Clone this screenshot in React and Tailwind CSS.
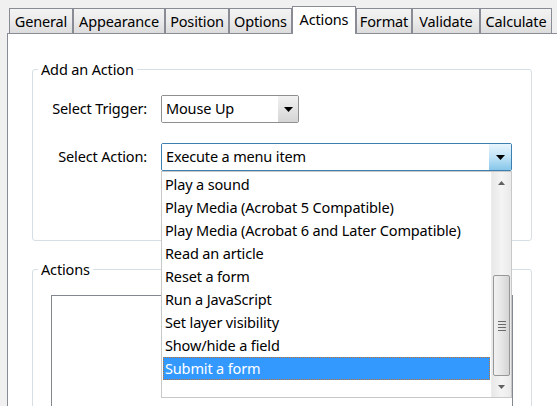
import React from 'react';

const tabs = [
  ['General', 64],
  ['Appearance', 92],
  ['Position', 64],
  ['Options', 63],
  ['Actions', 64],
  ['Format', 56],
  ['Validate', 68],
  ['Calculate', 72],
];

const actionItems = [
  'Play a sound',
  'Play Media (Acrobat 5 Compatible)',
  'Play Media (Acrobat 6 and Later Compatible)',
  'Read an article',
  'Reset a form',
  'Run a JavaScript',
  'Set layer visibility',
  'Show/hide a field',
  'Submit a form',
];

function Arrow({ up, className }) {
  return (
    <svg width="9" height="5" viewBox="0 0 9 5" className={className}>
      <path d={up ? 'M0 5 L4.5 0 L9 5 Z' : 'M0 0 L9 0 L4.5 5 Z'} fill="currentColor" />
    </svg>
  );
}

function Scrollbar() {
  return (
    <div className="w-[20px] flex flex-col bg-gradient-to-r from-[#e8e8e8] via-[#f4f4f4] to-[#eaeaea] border-l border-[#ececec]">
      <div className="h-[22px] flex items-center justify-center text-[#606060]">
        <Arrow up className="w-[7px] h-[4px]" />
      </div>
      <div className="h-[81px]" />
      <div className="h-[101px] mx-px rounded-[2px] border border-[#979797] bg-gradient-to-r from-[#f2f2f2] via-[#e6e6e6] to-[#d4d4d4] flex flex-col items-center justify-center gap-[2px]">
        <div className="w-[8px] h-px bg-[#6a6a6a]" />
        <div className="w-[8px] h-px bg-[#6a6a6a]" />
        <div className="w-[8px] h-px bg-[#6a6a6a]" />
        <div className="w-[8px] h-px bg-[#6a6a6a]" />
      </div>
      <div className="flex-1 flex items-center justify-center text-[#606060]">
        <Arrow className="w-[7px] h-[4px]" />
      </div>
    </div>
  );
}

export default function App() {
  return (
    <div
      className="w-[557px] h-[406px] overflow-hidden bg-[#f0f0f0] flex flex-col text-[14.5px] tracking-[-0.15px] text-black relative"
      style={{ fontFamily: '"Noto Sans", "Open Sans", sans-serif' }}
    >
      {/* tab strip */}
      <div className="flex items-end pl-[9px] pt-[6px]">
        {tabs.map(([name, w]) =>
          name === 'Actions' ? (
            <div
              key={name}
              className="relative z-10 -mb-px h-[28px] border border-b-0 border-[#898c95] bg-white flex items-center justify-center leading-none pb-[3px]"
              style={{ width: w }}
            >
              {name}
            </div>
          ) : (
            <div
              key={name}
              className="h-[25px] border border-b-0 border-[#898c95] bg-gradient-to-b from-[#f3f3f3] via-[#ebebeb] to-[#dcdcdc] flex items-center justify-center leading-none"
              style={{ width: w }}
            >
              {name}
            </div>
          )
        )}
      </div>

      {/* panel */}
      <div className="flex-1 ml-[7px] border-l border-t border-[#898c95] bg-white">
        <fieldset className="ml-[24px] mt-[25px] w-[500px] border border-[#d5dfe5] rounded-[3px] pt-[16px] pb-[69px]">
          <legend className="ml-[5px] px-[3px] leading-[20px]">Add an Action</legend>
          <div className="flex items-center">
            <div className="w-[114px] text-right">Select Trigger:</div>
            <div className="ml-[14px] w-[138px] h-[28px] border border-[#8e8f8f] rounded-[2px] flex overflow-hidden">
              <div className="flex-1 bg-white flex items-center pl-[4px]">Mouse Up</div>
              <div className="w-[20px] bg-gradient-to-b from-[#f2f2f2] to-[#d5d5d5] flex items-center justify-center">
                <Arrow />
              </div>
            </div>
          </div>
          <div className="flex items-center mt-[20px]">
            <div className="w-[114px] text-right">Select Action:</div>
            <div className="relative ml-[14px] w-[351px] h-[28px]">
              <div className="h-full border border-[#3c7fb1] rounded-[2px] flex overflow-hidden">
                <div className="flex-1 bg-white flex items-center pl-[4px]">Execute a menu item</div>
                <div className="w-[22px] bg-gradient-to-b from-[#e8f5fd] via-[#bfe3f7] to-[#86c6ea] flex items-center justify-center">
                  <Arrow />
                </div>
              </div>
              {/* open list */}
              <div className="absolute left-0 top-full z-20 w-[351px] h-[227px] bg-white border border-[#c8c8c8] flex">
                <div className="flex-1 pt-px pl-px pr-px">
                  {actionItems.map((item) => (
                    <div
                      key={item}
                      className={
                        'h-[23px] flex items-center pl-[2px] whitespace-nowrap ' +
                        (item === 'Submit a form'
                          ? 'bg-[#3399ff] text-white outline-1 outline-dotted outline-[#c07030] -outline-offset-1'
                          : '')
                      }
                    >
                      {item}
                    </div>
                  ))}
                </div>
                <Scrollbar />
              </div>
            </div>
          </div>
        </fieldset>

        <fieldset className="ml-[24px] mt-[18px] w-[500px] h-[200px] border border-[#d5dfe5] rounded-[3px] pt-[16px]">
          <legend className="ml-[5px] px-[3px] leading-[20px]">Actions</legend>
          <div className="ml-[18px] w-[462px] h-[160px] border border-[#828790]" />
        </fieldset>
      </div>
    </div>
  );
}
